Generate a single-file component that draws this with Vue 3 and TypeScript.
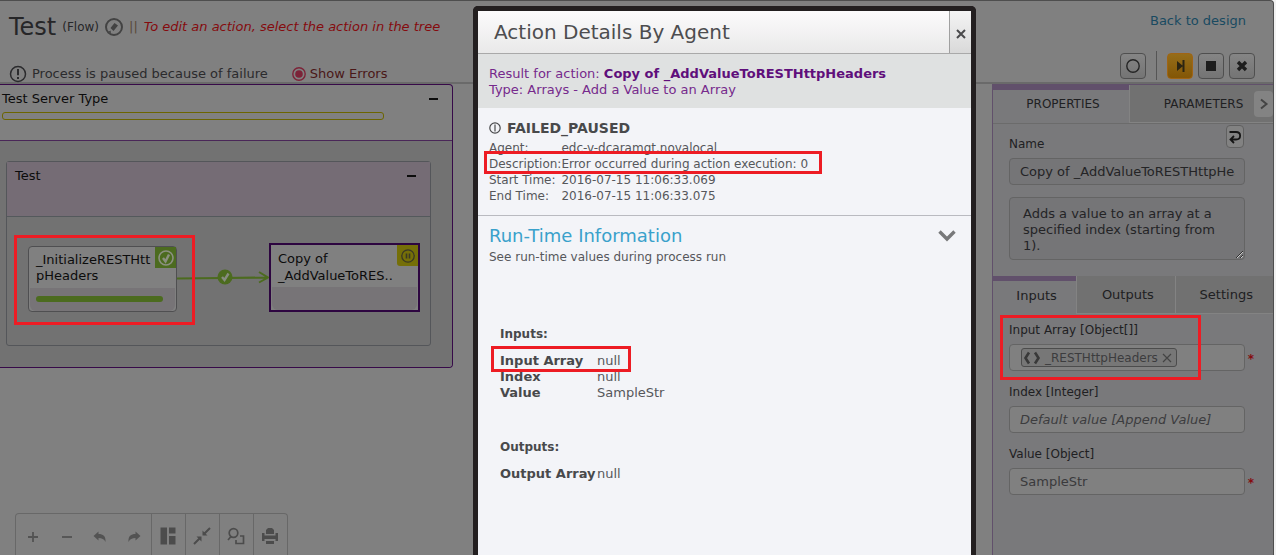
<script setup lang="ts">
import { ref } from 'vue'

interface Pair { label: string; value: string }

const actionName = ref('Copy of _AddValueToRESTHttpHeaders')
const description = ref('Adds a value to an array at a specified index (starting from 1).')
const indexValue = ref('')
const objectValue = ref('SampleStr')
const newToken = ref('')

const details: Pair[] = [
  { label: 'Agent:', value: 'edc-v-dcaramgt.novalocal' },
  { label: 'Description:', value: 'Error occurred during action execution: 0' },
  { label: 'Start Time:', value: '2016-07-15 11:06:33.069' },
  { label: 'End Time:', value: '2016-07-15 11:06:33.075' },
]
const inputs: Pair[] = [
  { label: 'Input Array', value: 'null' },
  { label: 'Index', value: 'null' },
  { label: 'Value', value: 'SampleStr' },
]
const outputs: Pair[] = [{ label: 'Output Array', value: 'null' }]
</script>

<template>
  <div class="app">
    <header class="top">
      <div class="top-left">
        <div class="title-row">
          <h1>Test</h1>
          <span class="kind">(Flow)</span>
          <svg class="compass" width="20" height="20" viewBox="0 0 20 20">
            <circle cx="10" cy="10" r="8" fill="none" stroke="#434343" stroke-width="2" />
            <path d="M10.500 6 L14 8.500 L9.500 14 L6.500 11 Z M4 15 L6.500 13.500 L7 16 Z" fill="#434343" />
          </svg>
          <span class="bars">||</span>
          <em>To edit an action, select the action in the tree</em>
        </div>
        <div class="status-row">
          <svg width="18" height="18" viewBox="0 0 18 18">
            <circle cx="9" cy="9" r="7.5" fill="none" stroke="#2b2b2d" stroke-width="1.5" />
            <path d="M9 4 V10.3 M9 12 V14" stroke="#2b2b2d" stroke-width="2" />
          </svg>
          <span class="status">Process is paused because of failure</span>
          <a class="errors" href="#">
            <svg width="14" height="14" viewBox="0 0 14 14">
              <circle cx="7" cy="7" r="6.2" fill="none" stroke="#7c2338" stroke-width="1.4" />
              <circle cx="7" cy="7" r="3.8" fill="#7c2338" />
            </svg>
            Show Errors
          </a>
        </div>
      </div>
      <div class="top-right">
        <a class="back" href="#">Back to design</a>
        <div class="run-buttons">
          <button type="button" aria-label="Breakpoint">
            <svg width="16" height="16" viewBox="0 0 16 16"><circle cx="8" cy="8" r="6.2" fill="none" stroke="#252525" stroke-width="1.4" /></svg>
          </button>
          <span class="sep"></span>
          <button type="button" class="go" aria-label="Step">
            <svg width="14" height="14" viewBox="0 0 14 14"><path d="M4 2 L10 7 L4 12 Z M9.5 1 H11.5 V13 H9.5 Z" fill="#2b2412" /></svg>
          </button>
          <button type="button" aria-label="Stop">
            <svg width="12" height="12" viewBox="0 0 12 12"><rect x="1" y="1" width="10" height="10" fill="#1d1d1d" /></svg>
          </button>
          <button type="button" aria-label="Cancel">
            <svg width="12" height="12" viewBox="0 0 12 12"><path d="M2 2 L10 10 M10 2 L2 10" stroke="#1d1d1d" stroke-width="3.4" /></svg>
          </button>
        </div>
      </div>
    </header>

    <div class="body">
      <main class="canvas">
        <section class="server">
          <div class="server-head">
            <div class="head-line"><span>Test Server Type</span><button type="button" class="fold" aria-label="Collapse server"></button></div>
            <div class="server-progress"></div>
          </div>
          <div class="server-body">
            <section class="group">
              <div class="group-head"><span>Test</span><button type="button" class="fold" aria-label="Collapse group"></button></div>
              <div class="group-body">
                <svg class="link" width="94" height="22" viewBox="0 0 94 22">
                  <path d="M0 11.5 L46 11 L90 10.5 M82 5 L91 10.5 L82 15.5" fill="none" stroke="#4c6b1f" stroke-width="2" />
                  <circle cx="48" cy="10" r="7.5" fill="#4c6b1f" />
                  <path d="M45 10 L47.5 13 L51.5 6.5" fill="none" stroke="#878c80" stroke-width="2.4" />
                </svg>
                <article class="node first">
                  <p>_InitializeRESTHtt<br>pHeaders</p>
                  <span class="badge">
                    <svg width="18" height="18" viewBox="0 0 18 18">
                      <circle cx="9" cy="9" r="7" fill="none" stroke="#8b9080" stroke-width="1.6" />
                      <path d="M6 9 L8.5 12.5 L12 5.5" fill="none" stroke="#8b9080" stroke-width="2.4" />
                    </svg>
                  </span>
                  <div class="node-foot"><div class="node-bar"></div></div>
                </article>
                <article class="node second">
                  <p>Copy of<br>_AddValueToRES..</p>
                  <span class="badge">
                    <svg width="16" height="16" viewBox="0 0 16 16">
                      <circle cx="8" cy="8" r="6.2" fill="none" stroke="#3a3825" stroke-width="1.3" />
                      <path d="M6.5 5.5 V10.5 M9.5 5.5 V10.5" stroke="#3a3825" stroke-width="1.6" />
                    </svg>
                  </span>
                  <div class="node-foot"></div>
                </article>
                <div class="mark mark-node"></div>
              </div>
            </section>
          </div>
        </section>

        <div class="tools">
          <div class="tool-group">
            <button type="button" aria-label="Zoom in"><svg width="14" height="14" viewBox="0 0 14 14"><path d="M7 2 V12 M2 7 H12" stroke="#535353" stroke-width="1.8" /></svg></button>
            <button type="button" aria-label="Zoom out"><svg width="14" height="14" viewBox="0 0 14 14"><path d="M2 7 H12" stroke="#535353" stroke-width="1.8" /></svg></button>
            <button type="button" aria-label="Undo"><svg width="14" height="14" viewBox="0 0 14 14"><path d="M0.5 6 L5.5 1.5 V4 C10 4 13 6 12.5 12 C11 9 9 8 5.5 8 V10.5 Z" fill="#535353" /></svg></button>
            <button type="button" aria-label="Redo"><svg width="14" height="14" viewBox="0 0 14 14"><path d="M13.5 6 L8.5 1.5 V4 C4 4 1 6 1.5 12 C3 9 5 8 8.5 8 V10.5 Z" fill="#535353" /></svg></button>
          </div>
          <button type="button" aria-label="Layout"><svg width="18" height="18" viewBox="0 0 18 18"><path d="M1.500 .5 H8 V17.500 H1.500 Z M10 .5 H16.500 V6.500 H10 Z M10 9 H16.500 V17.500 H10 Z" fill="#4c4c4c" /></svg></button>
          <button type="button" aria-label="Fit"><svg width="18" height="18" viewBox="0 0 18 18"><path d="M17 1 L10.500 7.500 M1 17 L7.500 10.500" stroke="#4c4c4c" stroke-width="2" /><path d="M9.500 3.500 V8.500 H14.500 Z M3.500 9.500 H8.500 V14.500 Z" fill="#4c4c4c" /></svg></button>
          <button type="button" aria-label="Find"><svg width="18" height="18" viewBox="0 0 18 18"><circle cx="6.500" cy="6" r="4.300" fill="none" stroke="#4c4c4c" stroke-width="1.700" /><path d="M4 9.500 L1 13 M13 9 H16.500 V16.500 H9 V13" fill="none" stroke="#4c4c4c" stroke-width="1.700" /></svg></button>
          <button type="button" aria-label="Print"><svg width="18" height="18" viewBox="0 0 18 18"><path d="M5 7 V3 L7 1 H11 L13 3 V7 Z M1 6 H3.500 V8.500 H14.500 V6 H17 V14 H14.500 V12 H3.500 V14 H1 Z M5 14 H13 V17 H5 Z" fill="#4c4c4c" /></svg></button>
        </div>
      </main>

      <aside class="panel">
        <nav class="tabs main-tabs">
          <button type="button" class="active">PROPERTIES</button>
          <button type="button">PARAMETERS</button>
          <button type="button" class="scroll" aria-label="More tabs"><svg width="10" height="14" viewBox="0 0 10 14"><path d="M2 2.500 L7.500 7 L2 11.500" fill="none" stroke="#444" stroke-width="2" /></svg></button>
        </nav>
        <div class="name-form">
          <button type="button" class="revert" aria-label="Revert"><svg width="14" height="16" viewBox="0 0 14 16"><path d="M1.500 3 H8 C13.500 3 13.500 10.500 8 10.500 H3 M6 7 L2.500 10.500 L6 14" fill="none" stroke="#151515" stroke-width="1.800" /></svg></button>
          <label for="name">Name</label>
          <input id="name" v-model="actionName" class="shade" type="text">
          <textarea id="desc" v-model="description" class="shade" aria-label="Description"></textarea>
        </div>
        <nav class="tabs sub-tabs">
          <button type="button" class="active">Inputs</button>
          <button type="button">Outputs</button>
          <button type="button">Settings</button>
        </nav>
        <div class="fields">
          <div class="mark mark-field"></div>
          <div class="field required">
            <label for="array">Input Array [Object[]]</label>
            <div class="token-box">
              <span class="token">
                <svg width="18" height="14" viewBox="0 0 18 14"><path d="M6 1.500 L2.500 7 L6 12.500 M12 1.500 L15.500 7 L12 12.500" fill="none" stroke="#393939" stroke-width="2.600" /></svg>
                _RESTHttpHeaders
                <button type="button" aria-label="Remove"><svg width="10" height="10" viewBox="0 0 10 10"><path d="M1 1 L9 9 M9 1 L1 9" stroke="#444" stroke-width="1.200" /></svg></button>
              </span>
              <input id="array" v-model="newToken" type="text">
            </div>
          </div>
          <div class="field">
            <label for="index">Index [Integer]</label>
            <input id="index" v-model="indexValue" type="text" placeholder="Default value [Append Value]">
          </div>
          <div class="field required">
            <label for="value">Value [Object]</label>
            <input id="value" v-model="objectValue" type="text">
          </div>
        </div>
      </aside>
    </div>

    <div class="dialog" role="dialog" aria-labelledby="dialog-title">
      <div class="dialog-head">
        <h2 id="dialog-title">Action Details By Agent</h2>
        <button type="button" aria-label="Close"><svg width="12" height="12" viewBox="0 0 12 12"><path d="M2 2 L10 10 M10 2 L2 10" stroke="#4a4a4c" stroke-width="2" /></svg></button>
      </div>
      <div class="result">
        <div>Result for action: <strong>Copy of _AddValueToRESTHttpHeaders</strong></div>
        <div>Type: Arrays - Add a Value to an Array</div>
      </div>
      <section class="details">
        <h3>
          <svg width="12" height="12" viewBox="0 0 12 12"><circle cx="6" cy="6" r="5.200" fill="none" stroke="#48494b" stroke-width="1.200" /><path d="M6 2.500 V9.500" stroke="#48494b" stroke-width="1.200" /></svg>
          FAILED_PAUSED
        </h3>
        <table>
          <tbody>
            <tr v-for="row in details" :key="row.label"><th scope="row">{{ row.label }}</th><td>{{ row.value }}</td></tr>
          </tbody>
        </table>
        <div class="mark mark-desc"></div>
      </section>
      <section class="runtime">
        <button type="button" class="runtime-head">
          <span>Run-Time Information</span>
          <svg width="18" height="12" viewBox="0 0 18 12"><path d="M1.500 1.500 L9 9 L16.500 1.500" fill="none" stroke="#77787a" stroke-width="3.400" /></svg>
        </button>
        <p>See run-time values during process run</p>
        <div class="values">
          <h4>Inputs:</h4>
          <table>
            <tbody>
              <tr v-for="row in inputs" :key="row.label"><th scope="row">{{ row.label }}</th><td>{{ row.value }}</td></tr>
            </tbody>
          </table>
          <div class="mark mark-input"></div>
          <h4 class="out">Outputs:</h4>
          <table>
            <tbody>
              <tr v-for="row in outputs" :key="row.label"><th scope="row">{{ row.label }}</th><td>{{ row.value }}</td></tr>
            </tbody>
          </table>
        </div>
      </section>
    </div>
  </div>
</template>

<style>
body { background: #f2f2f2; }
</style>

<style scoped>
* { box-sizing: border-box; }
.app {
  position: relative;
  display: flex;
  flex-direction: column;
  height: 100vh;
  margin-right: 2px;
  overflow: hidden;
  background: #808080;
  border-top: 1px solid #4e4e4e;
  border-right: 1px solid #4e4e4e;
  border-top-right-radius: 4px;
  color: #1d1d1d;
  font: 13px/16px Verdana, "DejaVu Sans", sans-serif;
}
h1, h2, h3, h4, p { margin: 0; font-weight: normal; }
button {
  display: flex;
  align-items: center;
  justify-content: center;
  margin: 0;
  padding: 0;
  border: 0;
  background: none;
  color: inherit;
  font: inherit;
}
a { text-decoration: none; }
svg { display: block; flex: none; }
table { border-collapse: collapse; table-layout: fixed; }
th, td { padding: 0; text-align: left; white-space: nowrap; }
.mark { position: absolute; border: 3px solid #ed1c24; pointer-events: none; }

.top {
  display: flex;
  flex: none;
  justify-content: space-between;
  height: 83px;
  border-bottom: 2px solid #6a6a6a;
}
.top-left { padding: 9px 0 0 9px; }
.title-row { display: flex; align-items: center; height: 34px; }
h1 { color: #262628; font-size: 24px; line-height: 32px; }
.kind { margin-left: 6px; color: #262628; font-size: 12px; }
.compass { margin-left: 5px; }
.bars { margin: 0 6px 0 5px; color: #5a4a3a; }
.title-row em { color: #850b0e; }
.status-row { display: flex; align-items: center; height: 18px; margin-top: 21px; }
.status { margin-left: 5px; color: #2b2b2d; }
.errors { display: flex; align-items: center; gap: 4px; margin-left: 24px; color: #4a1717; }
.top-right { display: flex; flex-direction: column; align-items: flex-end; padding: 12px 18px 0 0; }
.back { margin-right: 9px; color: #194a61; }
.run-buttons { display: flex; align-items: center; gap: 5px; margin-top: 22px; }
.run-buttons button {
  width: 26px;
  height: 26px;
  border: 1px solid #4f4f4f;
  border-radius: 4px;
  background: linear-gradient(#858585, #747474);
}
.run-buttons .sep { width: 1px; height: 29px; margin: 0 5px; background: #555; }
.run-buttons .go { border-color: #a06414; background: linear-gradient(#956d19, #835606); }

.body { display: flex; flex: 1; min-height: 0; }
.canvas { position: relative; display: flex; flex: 1; flex-direction: column; min-width: 0; }
.server {
  width: 453px;
  border: 1px solid #370a49;
  border-left: 0;
  border-radius: 0 4px 4px 0;
  color: #0c0c0c;
}
.server-head { height: 56px; padding: 6px 13px 0 2px; border-bottom: 1px solid #4a2758; }
.head-line, .group-head { display: flex; justify-content: space-between; }
.fold { width: 11px; height: 16px; }
.fold::before { width: 9px; height: 2px; background: #0c0c0c; content: ""; }
.server-progress { width: 382px; height: 8px; margin-top: 5px; border: 1px solid #6c6500; border-radius: 3px; }
.server-body { height: 226px; padding: 20px 21px 20px 6px; background: #727272; border-radius: 0 0 4px 0; }
.group { height: 185px; border: 1px solid #54565a; border-radius: 3px; }
.group-head { height: 55px; padding: 6px 13px 0 8px; border-bottom: 1px solid #54595c; background: #756c75; }
.group-body { position: relative; height: 128px; }
.node {
  position: absolute;
  display: flex;
  flex-direction: column;
  height: 66px;
  border: 1px solid #4f4f51;
  border-radius: 4px;
  background: #808080;
}
.node p { flex: 1; padding: 5px 0 0 7px; white-space: nowrap; }
.node-foot { height: 23px; margin: 0 1px; padding: 8px 12px 0 6px; border-radius: 0 0 6px 6px; background: #777477; }
.node-bar { height: 6px; border-radius: 3px; background: #4c6b1f; }
.badge { position: absolute; top: 0; right: 0; display: flex; align-items: center; justify-content: center; width: 21px; height: 21px; background: #4c6b1f; }
.first { top: 29px; left: 21px; width: 149px; }
.second { top: 26px; left: 262px; width: 151px; height: 69px; border: 2px solid #2d0540; border-radius: 0; }
.second p { line-height: 17px; }
.second .badge { background: #756f08; border-radius: 0 0 0 3px; }
.link { position: absolute; top: 50px; left: 170px; }
.mark-node { top: 18px; left: 7px; width: 181px; height: 90px; }
.tools { display: flex; width: 273px; height: 42px; margin: auto 0 0 15px; border: 1px solid #686868; border-bottom: 0; border-radius: 4px 4px 0 0; }
.tools > button { width: 34px; padding-top: 2px; padding-right: 2px; border-left: 1px solid #686868; }
.tool-group { display: flex; flex: 1; }
.tool-group button { flex: 1; padding-top: 4px; }

.panel { position: relative; flex: none; width: 281px; border-left: 1px solid #61506b; background: #79797b; color: #202022; }
.tabs { display: flex; }
.tabs button { padding-left: 4px; background: #717171; border-left: 1px solid #838383; border-bottom: 1px solid #838383; }
.tabs .active { border-left: 0; border-top: 5px solid #61506b; background: #79797b; }
.main-tabs { position: relative; height: 40px; border-top: 1px solid #61506b; border-bottom: 1px solid #6b6b6b; font-size: 12px; }
.main-tabs button { width: 144px; }
.main-tabs .active { width: 136px; padding-bottom: 5px; border-bottom: 0; }
.main-tabs .scroll { position: absolute; top: 6px; right: 0; width: 19px; height: 26px; padding: 0; border: 0; border-radius: 4px; background: #838383; }
.name-form { position: relative; height: 152px; padding: 12px 28px 0 16px; }
label { display: block; height: 22px; font-size: 12px; }
input, textarea {
  display: block;
  width: 100%;
  height: 27px;
  margin: 0;
  padding: 0 9px 0 10px;
  border: 1px solid #646464;
  border-radius: 4px;
  outline: 0;
  background: #808080;
  color: #3a3a3c;
  font: 13px/16px Verdana, "DejaVu Sans", sans-serif;
}
.shade { background: #757577; color: #242426; }
textarea { height: 63px; margin-top: 12px; padding: 8px 8px 0 13px; overflow: hidden; }
input::placeholder { color: #3c3c3e; font-style: italic; opacity: 1; }
.revert { position: absolute; top: 1px; right: 29px; width: 18px; height: 23px; border: 1px solid #606060; border-radius: 4px; background: #828282; }
.sub-tabs { height: 38px; }
.sub-tabs button { flex: 98; }
.sub-tabs .active { flex: 83; border-bottom: 0; padding-bottom: 3px; }
.fields { position: relative; padding: 8px 28px 0 16px; }
.field { position: relative; margin-bottom: 13px; }
.field label { height: 22px; }
.required::after { position: absolute; right: -9px; bottom: 4px; color: #850b0e; font-size: 12px; font-weight: bold; content: "*"; }
.token-box { display: flex; align-items: center; height: 27px; padding-left: 11px; border: 1px solid #646464; border-radius: 4px; background: #808080; }
.token-box input { flex: 1; width: 0; height: 20px; border: 0; background: none; }
.token { display: flex; align-items: center; gap: 4px; height: 19px; padding: 0 4px 0 1px; border: 1px solid #4c4c4c; border-radius: 3px; background: #777; color: #3c3c3e; font-size: 12px; }
.mark-field { top: 1px; left: 7px; width: 201px; height: 65px; z-index: 1; }

.dialog {
  position: absolute;
  top: 5px;
  right: 297px;
  bottom: 0;
  width: 503px;
  border: 5px solid #231f20;
  border-bottom: 0;
  border-radius: 5px 5px 0 0;
  background: #f3f4f8;
  color: #56575b;
  font-size: 12px;
}
.dialog-head { display: flex; height: 43px; border-bottom: 1px solid #a9a9a9; background: linear-gradient(#fcfbfc, #e9e9e9); }
.dialog-head h2 { flex: 1; padding-left: 16px; color: #4d4d4f; font-size: 20px; line-height: 42px; }
.dialog-head button { width: 22px; padding-top: 3px; border-left: 1px solid #a0a0a0; background: linear-gradient(#f4f4f4, #d9d9d9); }
.result { height: 54px; padding: 12px 11px; background: #dfe1e1; color: #762a8c; font-size: 13px; }
.result strong { color: #5f0f7b; }
.details { position: relative; height: 108px; padding: 12px 11px; border-bottom: 1px solid #b9bac0; }
.details h3 { display: flex; align-items: center; gap: 6px; height: 16px; margin-bottom: 4px; color: #48494b; font-size: 14px; font-weight: bold; }
.details th { width: 72px; font-weight: normal; }
.mark-desc { top: 43px; left: 6px; width: 338px; height: 23px; }
.runtime { padding: 8px 11px; }
.runtime-head { justify-content: space-between; width: 100%; height: 24px; padding-right: 4px; color: #3aa1cb; font-size: 18px; }
.runtime p { margin-top: 1px; }
.values { position: relative; padding: 61px 0 0 11px; font-size: 13px; }
.values h4 { margin-bottom: 11px; color: #48494b; font-size: 12px; font-weight: bold; }
.values th { width: 97px; color: #48494b; }
.values .out { margin-top: 38px; }
.mark-input { top: 81px; left: 2px; width: 140px; height: 26px; }
</style>
